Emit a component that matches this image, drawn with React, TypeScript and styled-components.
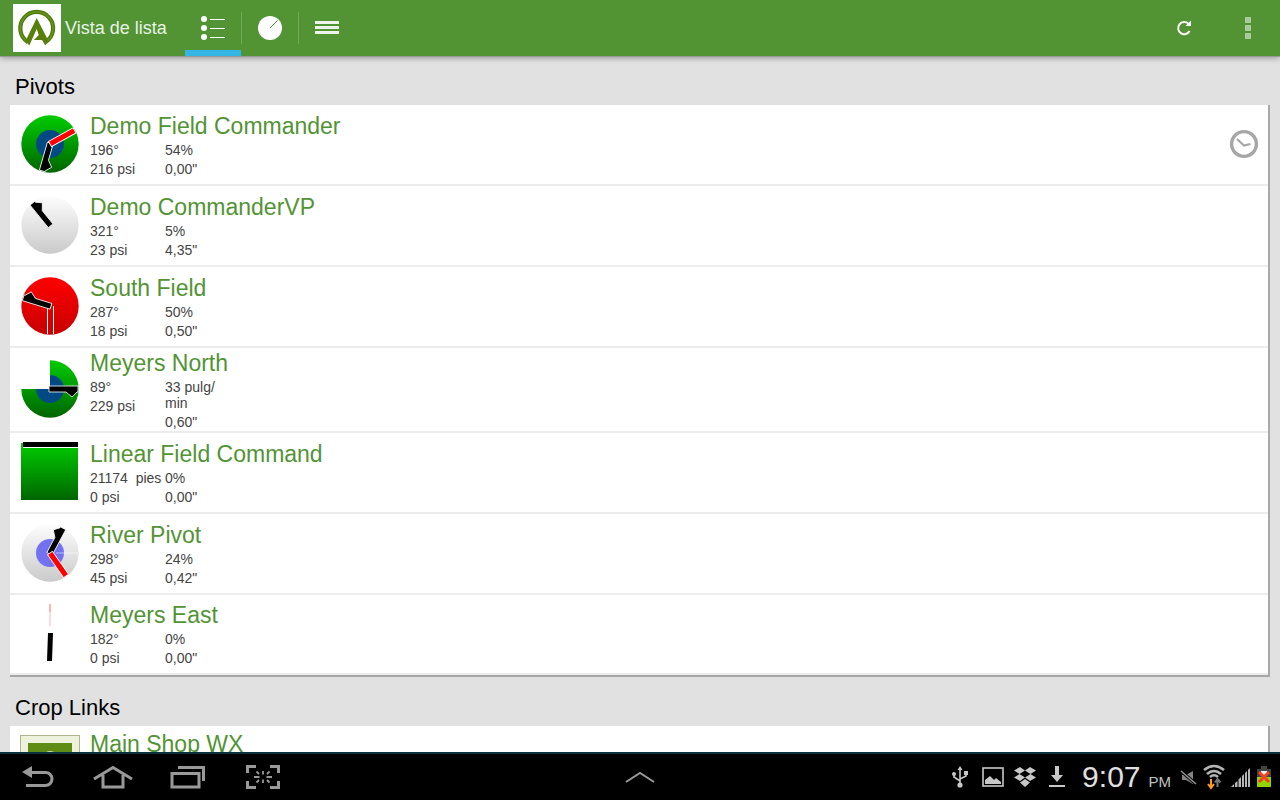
import React from "react";
import styled, { createGlobalStyle } from "styled-components";

const GlobalStyle = createGlobalStyle`
  *, *::before, *::after { box-sizing: border-box; }
  body {
    margin: 0;
    background: #e1e1e1;
    font-family: "Liberation Sans", Arial, sans-serif;
  }
  button { border: 0; padding: 0; background: none; font: inherit; }
  svg { display: block; flex: none; overflow: visible; }
`;

const Screen = styled.div`
  height: 100vh;
  display: flex;
  flex-direction: column;
`;

const ActionBar = styled.header`
  flex: none;
  display: flex;
  align-items: center;
  height: 56px;
  padding-left: 13px;
  background: #529434;
  box-shadow: 0 1px 0 #999, 0 2px 6px rgba(0, 0, 0, 0.35);
  position: relative;
`;

const Brand = styled.h1`
  display: flex;
  align-items: center;
  gap: 4px;
  width: 172px;
  margin: 0;
  color: #e9f2e5;
  font-size: 18px;
  font-weight: 400;
`;

const Tabs = styled.nav`
  display: flex;
  align-items: center;
  flex: 1;
  height: 100%;
`;

const Tab = styled.button<{ $active?: boolean }>`
  display: grid;
  place-items: center;
  width: 56px;
  height: 56px;
  box-shadow: ${(p) => (p.$active ? "inset 0 -6px 0 #33b5e5" : "none")};
`;

const TabDivider = styled.span`
  width: 1px;
  height: 32px;
  background: #72a95a;
`;

const BarAction = styled.button`
  display: grid;
  place-items: center;
  width: 64px;
  height: 56px;
`;

const Content = styled.main`
  flex: 1;
  min-height: 0;
  overflow: hidden;
  padding: 0 10px;
`;

const SectionTitle = styled.h2`
  margin: 0;
  padding: 17px 5px 4px;
  color: #000;
  font-size: 22px;
  line-height: 28px;
  font-weight: 400;
`;

const Card = styled.ul`
  margin: 0;
  padding: 0;
  list-style: none;
  background: #fff;
  border-right: 2px solid #a9a9a9;
  border-bottom: 2px solid #a5a8a5;
`;

const Row = styled.li`
  display: flex;
  align-items: center;
  gap: 10px;
  min-height: 81px;
  padding: 1px 10px;
  border-bottom: 2px solid #ececec;
  &:last-child { min-height: 80px; padding-bottom: 2px; }
`;

const LinkRow = styled(Row)`
  align-items: flex-start;
  padding-top: 4px;
`;

const Info = styled.div`
  flex: 1;
  display: flex;
  flex-direction: column;
  gap: 1px;
`;

const Name = styled.h3`
  margin: 0;
  color: #529434;
  font-size: 23px;
  line-height: 29px;
  font-weight: 400;
`;

const Readings = styled.div`
  display: flex;
`;

const Column = styled.div<{ $width: number }>`
  display: flex;
  flex-direction: column;
  gap: 3px;
  width: ${(p) => p.$width}px;
  color: #444;
  font-size: 14px;
  line-height: 16px;
  white-space: pre-wrap;
`;

const StationBadge = styled.span`
  display: block;
  width: 60px;
  height: 60px;
  margin-top: 5px;
  padding: 7px;
  background: #eef2dc;
  border: 1px solid #b0b78f;
`;

const SystemBar = styled.footer`
  flex: none;
  display: grid;
  grid-template-columns: 1fr auto 1fr;
  grid-template-rows: 46px;
  align-items: center;
  border-top: 2px solid #0a3040;
  background: #000;
`;

const SystemKeys = styled.div`
  display: flex;
  gap: 1px;
  padding-left: 1px;
`;

const SystemKey = styled.button`
  display: grid;
  place-items: center;
  width: 74px;
  height: 46px;
`;

const Status = styled.div`
  display: flex;
  align-items: center;
  justify-content: flex-end;
  gap: 10px;
  padding-right: 9px;
`;

const Clock = styled.time`
  display: flex;
  align-items: baseline;
  gap: 8px;
  margin-left: 4px;
  color: #e0e0e0;
  font-size: 30px;
  line-height: 36px;
`;

const Meridiem = styled.span`
  font-size: 15px;
  line-height: 16px;
  color: #c0c0c0;
`;

const SignalIcons = styled.div`
  display: flex;
  align-items: center;
  gap: 6px;
`;

function Arm({ angle, flip }: { angle: number; flip?: boolean }) {
  return (
    <path
      d="M-3 1V-28H3V-27L8 -22L3 -16V1Z"
      fill="#000"
      stroke="#fff"
      strokeWidth="0.8"
      transform={`translate(30 29) rotate(${angle}) scale(${flip ? -1 : 1} 1)`}
    />
  );
}

function Stop({ angle, length = 28 }: { angle: number; length?: number }) {
  return (
    <path
      d={`M-3.500 0V${-length}M2.500 0V${-length}`}
      stroke="#fff"
      strokeWidth="1"
      transform={`translate(30 29) rotate(${angle})`}
    />
  );
}

function RedArm({ angle }: { angle: number }) {
  return (
    <rect
      x="-3" y="-28" width="6" height="28"
      fill="#f00" stroke="#fff" strokeWidth="0.9"
      transform={`translate(30 29) rotate(${angle})`}
    />
  );
}

const Gradients = () => (
  <svg width="0" height="0" style={{ position: "absolute" }} aria-hidden>
    <defs>
      <linearGradient id="green" x1="0" y1="0" x2="0" y2="58" gradientUnits="userSpaceOnUse">
        <stop offset="0" stopColor="#00cc00" /><stop offset="1" stopColor="#006400" />
      </linearGradient>
      <linearGradient id="grey" x1="0" y1="0" x2="0" y2="1">
        <stop offset="0" stopColor="#fdfdfd" /><stop offset="1" stopColor="#cacaca" />
      </linearGradient>
      <linearGradient id="red" x1="0" y1="0" x2="0" y2="1">
        <stop offset="0" stopColor="#ff0000" /><stop offset="1" stopColor="#c80000" />
      </linearGradient>
    </defs>
  </svg>
);

type Kind = "field" | "idle" | "alarm" | "partial" | "linear" | "river" | "line";

function FieldIcon({ kind }: { kind: Kind }) {
  return (
    <svg width="60" height="59" viewBox="0 0 60 59" aria-hidden>
      {kind === "field" && (
        <>
          <circle cx="30" cy="29" r="28.7" fill="url(#green)" />
          <circle cx="30" cy="29" r="14" fill="#004a84" />
          <Arm angle={196} flip />
          <RedArm angle={61} />
        </>
      )}
      {kind === "idle" && (
        <>
          <circle cx="30" cy="29" r="28.7" fill="url(#grey)" />
          <Arm angle={321} />
        </>
      )}
      {kind === "alarm" && (
        <>
          <circle cx="30" cy="29" r="28.7" fill="url(#red)" />
          <Stop angle={180} />
          <Arm angle={287} />
        </>
      )}
      {kind === "partial" && (
        <>
          <path d="M30 29V0.3A28.7 28.7 0 1 1 1.3 29Z" fill="url(#green)" />
          <path d="M30 29V15A14 14 0 1 1 16 29Z" fill="#004a84" />
          <Arm angle={90} />
        </>
      )}
      {kind === "linear" && (
        <>
          <rect x="1" y="0" width="57" height="57" fill="url(#green)" />
          <rect x="3" y="-1" width="55" height="5" fill="#000" />
          <rect x="3" y="4" width="55" height="1" fill="#fff" />
        </>
      )}
      {kind === "river" && (
        <>
          <circle cx="30" cy="29" r="28.7" fill="url(#grey)" />
          <circle cx="30" cy="29" r="14" fill="#7272f0" />
          <path d="M36 29H58" stroke="#fff" strokeOpacity="0.5" />
          <Arm angle={28} flip />
          <RedArm angle={145} />
        </>
      )}
      {kind === "line" && (
        <>
          <rect x="29" y="0" width="2" height="8" fill="#ffb4b4" />
          <rect x="29" y="8" width="2" height="14" fill="#ffdada" />
          <path d="M28 29H33L32 57H27Z" fill="#000" />
        </>
      )}
    </svg>
  );
}

const pivots: { name: string; kind: Kind; left: string[]; right: string[]; scheduled?: boolean }[] = [
  { name: "Demo Field Commander", kind: "field", left: ["196°", "216 psi"], right: ["54%", '0,00"'], scheduled: true },
  { name: "Demo CommanderVP", kind: "idle", left: ["321°", "23 psi"], right: ["5%", '4,35"'] },
  { name: "South Field", kind: "alarm", left: ["287°", "18 psi"], right: ["50%", '0,50"'] },
  { name: "Meyers North", kind: "partial", left: ["89°", "229 psi"], right: ["33 pulg/min", '0,60"'] },
  { name: "Linear Field Command", kind: "linear", left: ["21174  pies", "0 psi"], right: ["0%", '0,00"'] },
  { name: "River Pivot", kind: "river", left: ["298°", "45 psi"], right: ["24%", '0,42"'] },
  { name: "Meyers East", kind: "line", left: ["182°", "0 psi"], right: ["0%", '0,00"'] },
];

// Units such as "pulg/min" may wrap after the slash.
const Reading = ({ text }: { text: string }) => (
  <span>
    {text.split("/").map((part, i) => (
      <React.Fragment key={i}>{i > 0 && <>/<wbr /></>}{part}</React.Fragment>
    ))}
  </span>
);

const Logo = () => (
  <svg width="48" height="48" viewBox="0 0 48 48" aria-hidden>
    <rect width="48" height="48" fill="#fff" />
    <path d="M15 38.2A16.400 16.400 0 1 1 32.400 38.2" fill="none" stroke="#4c7a08" strokeWidth="4.2" />
    <path d="M15 38.2A16.400 16.400 0 1 1 32.400 38.2" fill="none" stroke="#698f1c" strokeWidth="1.8" />
    <path d="M23.700 14L34 34L35 37L32.300 41.500L29 36H21L25.800 31L23.700 25L16.300 41.500L12.500 37L14 34Z" fill="#567f0d" />
  </svg>
);

const ScheduleIcon = () => (
  <svg width="28" height="29" viewBox="0 0 28 29" role="img" aria-label="Programado">
    <circle cx="14" cy="14" r="12.4" fill="none" stroke="#a6a6a6" strokeWidth="3.4" />
    <path d="M7 9L14 15.5L20.5 14" fill="none" stroke="#a6a6a6" strokeWidth="2.2" />
  </svg>
);

export default function App() {
  return (
    <Screen>
      <GlobalStyle />
      <Gradients />
      <ActionBar>
        <Brand><Logo />Vista de lista</Brand>
        <Tabs>
          <Tab $active aria-label="Lista">
            <svg width="24" height="24" viewBox="0 0 24 24" fill="#fff">
              <circle cx="3" cy="3" r="3" /><circle cx="3" cy="12" r="3" /><circle cx="3" cy="21" r="3" />
              <path d="M9 3h15v1H9zM9 12h15v1H9zM9 21h15v1H9z" />
            </svg>
          </Tab>
          <TabDivider />
          <Tab aria-label="Mapa">
            <svg width="24" height="24" viewBox="0 0 24 24">
              <circle cx="12" cy="12" r="12" fill="#fff" />
              <path d="M12 12L19.5 4.5" stroke="#529434" strokeWidth="1" />
            </svg>
          </Tab>
          <TabDivider />
          <Tab aria-label="Menú">
            <svg width="24" height="14" viewBox="0 0 24 14" fill="#edf4ea">
              <path d="M0 0h24v3H0zM0 5h24v3H0zM0 10h24v3H0z" />
            </svg>
          </Tab>
        </Tabs>
        <BarAction aria-label="Actualizar">
          <svg width="16" height="16" viewBox="0 0 16 16">
            <path d="M13.6 11A6.1 6.1 0 1 1 12.4 3.6" fill="none" stroke="#fff" strokeWidth="1.9" />
            <path d="M15 0.5V6H9.5Z" fill="#fff" />
          </svg>
        </BarAction>
        <BarAction aria-label="Más opciones">
          <svg width="6" height="22" viewBox="0 0 6 22" fill="#a9ca9a">
            <path d="M0 0h6v6H0zM0 8h6v6H0zM0 16h6v6H0z" />
          </svg>
        </BarAction>
      </ActionBar>

      <Content>
        <SectionTitle>Pivots</SectionTitle>
        <Card>
          {pivots.map((p) => (
            <Row key={p.name}>
              <FieldIcon kind={p.kind} />
              <Info>
                <Name>{p.name}</Name>
                <Readings>
                  <Column $width={75}>{p.left.map((t) => <Reading key={t} text={t} />)}</Column>
                  <Column $width={65}>{p.right.map((t) => <Reading key={t} text={t} />)}</Column>
                </Readings>
              </Info>
              {p.scheduled && <ScheduleIcon />}
            </Row>
          ))}
        </Card>
        <SectionTitle>Crop Links</SectionTitle>
        <Card>
          <LinkRow>
            <StationBadge>
              <svg width="44" height="44" viewBox="0 0 44 44" aria-hidden>
                <rect width="44" height="44" fill="#5f8c14" />
                <circle cx="22" cy="16" r="7" fill="none" stroke="#cfdcae" strokeWidth="2" />
              </svg>
            </StationBadge>
            <Info><Name>Main Shop WX</Name></Info>
          </LinkRow>
        </Card>
      </Content>

      <SystemBar>
        <SystemKeys>
          <SystemKey aria-label="Atrás">
            <svg width="32" height="22" viewBox="0 0 32 22">
              <path d="M9 6.5H23.5A6.5 6.5 0 0 1 23.5 19.5H4" fill="none" stroke="#999" strokeWidth="3" />
              <path d="M0 6L10 0V12Z" fill="#999" />
            </svg>
          </SystemKey>
          <SystemKey aria-label="Inicio">
            <svg width="40" height="24" viewBox="0 0 40 24" fill="none" stroke="#999" strokeWidth="3">
              <path d="M1 14L20 2.5L39 14M10 10V22H30V10" />
            </svg>
          </SystemKey>
          <SystemKey aria-label="Recientes">
            <svg width="36" height="24" viewBox="0 0 36 24" fill="none" stroke="#999" strokeWidth="3">
              <path d="M2 8.5H29V22H2ZM8 2.5H33.5V16" />
            </svg>
          </SystemKey>
          <SystemKey aria-label="Captura">
            <svg width="34" height="24" viewBox="0 0 34 24" fill="none" stroke="#999">
              <path d="M1.5 8V1.5H10M24 1.5H32.5V8M32.5 16V22.5H24M10 22.5H1.5V16" strokeWidth="3" />
              <path d="M17 6V9.5M17 14.5V18M8 12H13.5M20.5 12H26M10.5 6.5L13 9M23.5 6.5L21 9M10.5 17.5L13 15M23.5 17.5L21 15" strokeWidth="1.8" />
            </svg>
          </SystemKey>
        </SystemKeys>
        <SystemKey aria-label="Abrir panel">
          <svg width="30" height="12" viewBox="0 0 30 12">
            <path d="M1 11L15 2L29 11" fill="none" stroke="#999" strokeWidth="2" />
          </svg>
        </SystemKey>
        <Status>
          <svg width="20" height="22" viewBox="0 0 20 22" fill="#c8c8c8">
            <path d="M8 3V18M2 7V11L8 15M14 6V10L8 13" fill="none" stroke="#c8c8c8" strokeWidth="1.6" />
            <path d="M8 0L10.5 4H5.5Z" /><circle cx="8" cy="19" r="2.6" /><circle cx="2" cy="8" r="2" /><rect x="12" y="5" width="4" height="4" />
          </svg>
          <svg width="22" height="20" viewBox="0 0 22 20">
            <rect x="1" y="1" width="20" height="18" fill="none" stroke="#c8c8c8" strokeWidth="1.6" />
            <path d="M3 17V13L8 9L12 13L14 11L19 15V17Z" fill="#c8c8c8" />
          </svg>
          <svg width="22" height="20" viewBox="0 0 22 20" fill="#c8c8c8">
            <path d="M6 0L11 3.5L5.5 7L0 3.5ZM16 0L22 3.5L16.5 7L11 3.5ZM5.5 7L11 10.5L6 14L0 10.5ZM16.5 7L22 10.5L16 14L11 10.5ZM11 12L16 15.5L11 20L6 15.5Z" />
          </svg>
          <svg width="22" height="22" viewBox="0 0 22 22" fill="#c8c8c8">
            <path d="M9 0H13V9H17L11 16L5 9H9ZM3 19H19V21H3Z" />
          </svg>
          <Clock>9:07 <Meridiem>PM</Meridiem></Clock>
          <SignalIcons>
            <svg width="16" height="15" viewBox="0 0 16 15">
              <path d="M1 5H5L12 1V14L5 10H1Z" fill="#858585" />
              <path d="M0 1L15 14" stroke="#000" strokeWidth="3" /><path d="M0 1L15 14" stroke="#999" strokeWidth="1.4" />
            </svg>
            <svg width="22" height="24" viewBox="0 0 22 24" fill="none">
              <path d="M1 5Q11 -3 21 5M4 9Q11 3 18 9M7 12Q11 8.5 15 12" stroke="#b5b5b5" strokeWidth="2.6" />
              <path d="M8 14V22M5 19L8 23L11 19" stroke="#ff9c20" strokeWidth="2" />
              <path d="M14.500 22V15M12 17.500L14.500 14L17.500 17.500" stroke="#777" strokeWidth="2" />
            </svg>
            <svg width="20" height="20" viewBox="0 0 20 20" fill="#b5b5b5">
              <path d="M0 20L3 17V20ZM4 16L6.500 14V20H4ZM7.500 12.500L10 10V20H7.500ZM11 9L13 7V20H11ZM14 6L16 4V20H14ZM17 3L19 1V20H17Z" />
            </svg>
            <svg width="14" height="22" viewBox="0 0 14 22">
              <path d="M4 0H10V3H14V21H0V3H4Z" fill="#444" />
              <rect x="4" y="5" width="6" height="5" fill="#eee" />
              <rect y="11" width="14" height="10" fill="#8fd400" />
              <path d="M2 6L12 16M12 6L2 16" stroke="#f5401c" strokeWidth="3" />
            </svg>
          </SignalIcons>
        </Status>
      </SystemBar>
    </Screen>
  );
}
